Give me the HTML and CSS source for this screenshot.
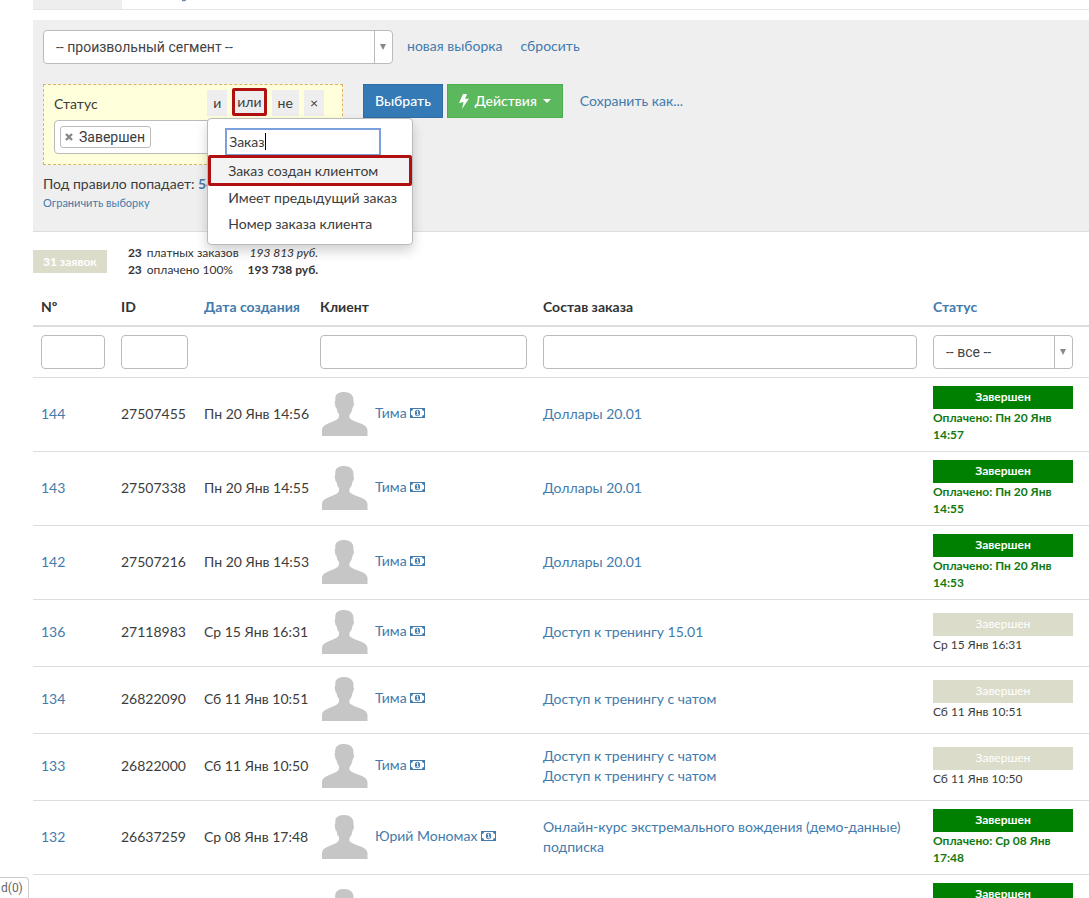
FILE: index.html
```html
<!DOCTYPE html>
<html lang="ru">
<head>
<meta charset="utf-8">
<title>Заказы</title>
<link rel="stylesheet" href="styles.css">
</head>
<body>
<svg class="sprite" aria-hidden="true">
  <symbol id="person" viewBox="0 0 50 50"><path d="M2 46V40Q2 36 7 34L14 31Q19 29 19 26L19 24Q17 22 16.500 18Q15 17 15 14Q14 12 15.200 11Q14 3 22 2Q33 1 33.500 10V12Q34.500 14 33.500 16L32.500 18Q32 22 29.500 25V28Q30 29 34 31L42 34Q47 36 47.500 40V46Z" fill="#c6c6c6"/></symbol>
  <symbol id="money" viewBox="0 0 15 10"><path fill="currentColor" fill-rule="evenodd" d="M0 0H15V10H0ZM3 1Q3 3 1 3V7Q3 7 3 9H12Q12 7 14 7V3Q12 3 12 1Z"/><ellipse cx="7.500" cy="5" rx="2.600" ry="3.200" fill="currentColor"/><path d="M6.500 3.500L7.700 2.800V6.500M6.400 6.800H9" stroke="#fff" fill="none"/></symbol>
</svg>
<main class="page">
  <nav class="tabs" aria-label="Разделы"><span class="tab"></span><svg class="tab-mark" width="5" height="2" viewBox="0 0 5 2"><path d="M0 .5Q2 1.500 4 0" stroke="#55708c" fill="none"/></svg></nav>

  <section class="panel">
    <div class="segment">
      <span class="select select-segment"><select aria-label="Сегмент"><option>-- произвольный сегмент --</option></select></span>
      <a href="#">новая выборка</a>
      <a href="#">сбросить</a>
    </div>
    <div class="builder">
      <div class="rule">
        <div class="rule-head">
          <span class="rule-name">Статус</span>
          <div class="ops">
            <button type="button" class="op">и</button>
            <button type="button" class="op op-marked">или</button>
            <button type="button" class="op">не</button>
            <button type="button" class="op op-close" aria-label="Удалить">×</button>
            <div class="menu">
              <input class="menu-search" type="text" value="Заказ" aria-label="Поиск условия">
              <span class="caret-line"></span>
              <button type="button" class="menu-item menu-item-marked">Заказ создан клиентом</button>
              <button type="button" class="menu-item">Имеет предыдущий заказ</button>
              <button type="button" class="menu-item">Номер заказа клиента</button>
            </div>
          </div>
        </div>
        <div class="tags">
          <span class="tag"><button type="button" class="tag-remove" aria-label="Убрать"><svg width="8" height="8" viewBox="0 0 8 8"><path d="M1 1L7 7M7 1L1 7" stroke="#888" stroke-width="2.400"/></svg></button>Завершен</span>
        </div>
      </div>
      <div class="actions">
        <button type="button" class="btn btn-primary">Выбрать</button>
        <button type="button" class="btn btn-success"><svg width="10" height="15" viewBox="0 0 10 15"><path d="M4 0H8L6 5L10 4.500L3 15L4.500 8L0 9Z" fill="#fff"/></svg>Действия<span class="caret"></span></button>
        <a class="save" href="#">Сохранить как...</a>
      </div>
    </div>
    <div class="matched">Под правило попадает: <a href="#">54</a></div>
    <a class="limit" href="#">Ограничить выборку</a>
  </section>

  <section class="summary">
    <span class="count"><b>31</b> заявок</span>
    <div class="totals">
      <b>23</b><span>платных заказов</span><i>193 813 руб.</i>
      <b>23</b><span>оплачено 100%</span><b class="sum">193 738 руб.</b>
    </div>
  </section>

  <table class="orders">
    <colgroup><col class="c-num"><col class="c-id"><col class="c-date"><col class="c-client"><col><col class="c-status"></colgroup>
    <thead>
      <tr><th>Nº</th><th>ID</th><th><a href="#">Дата создания</a></th><th>Клиент</th><th>Состав заказа</th><th><a href="#">Статус</a></th></tr>
    </thead>
    <tbody>
      <tr class="filters">
        <td><input type="text" aria-label="Номер"></td><td><input type="text" aria-label="ID"></td><td></td><td><input type="text" aria-label="Клиент"></td><td><input type="text" aria-label="Состав заказа"></td>
        <td><span class="select select-status"><select aria-label="Статус"><option>-- все --</option></select></span></td>
      </tr>
      <tr class="order"><td><a href="#">144</a></td><td>27507455</td><td>Пн 20 Янв 14:56</td><td><div class="client"><svg class="avatar"><use href="#person"/></svg><a href="#">Тима <svg class="money"><use href="#money"/></svg></a></div></td><td><a href="#">Доллары 20.01</a></td><td><div class="state paid">Завершен</div><div class="when when-paid">Оплачено: Пн 20 Янв 14:57</div></td></tr>
      <tr class="order"><td><a href="#">143</a></td><td>27507338</td><td>Пн 20 Янв 14:55</td><td><div class="client"><svg class="avatar"><use href="#person"/></svg><a href="#">Тима <svg class="money"><use href="#money"/></svg></a></div></td><td><a href="#">Доллары 20.01</a></td><td><div class="state paid">Завершен</div><div class="when when-paid">Оплачено: Пн 20 Янв 14:55</div></td></tr>
      <tr class="order"><td><a href="#">142</a></td><td>27507216</td><td>Пн 20 Янв 14:53</td><td><div class="client"><svg class="avatar"><use href="#person"/></svg><a href="#">Тима <svg class="money"><use href="#money"/></svg></a></div></td><td><a href="#">Доллары 20.01</a></td><td><div class="state paid">Завершен</div><div class="when when-paid">Оплачено: Пн 20 Янв 14:53</div></td></tr>
      <tr class="order"><td><a href="#">136</a></td><td>27118983</td><td>Ср 15 Янв 16:31</td><td><div class="client"><svg class="avatar"><use href="#person"/></svg><a href="#">Тима <svg class="money"><use href="#money"/></svg></a></div></td><td><a href="#">Доступ к тренингу 15.01</a></td><td><div class="state">Завершен</div><div class="when">Ср 15 Янв 16:31</div></td></tr>
      <tr class="order"><td><a href="#">134</a></td><td>26822090</td><td>Сб 11 Янв 10:51</td><td><div class="client"><svg class="avatar"><use href="#person"/></svg><a href="#">Тима <svg class="money"><use href="#money"/></svg></a></div></td><td><a href="#">Доступ к тренингу с чатом</a></td><td><div class="state">Завершен</div><div class="when">Сб 11 Янв 10:51</div></td></tr>
      <tr class="order"><td><a href="#">133</a></td><td>26822000</td><td>Сб 11 Янв 10:50</td><td><div class="client"><svg class="avatar"><use href="#person"/></svg><a href="#">Тима <svg class="money"><use href="#money"/></svg></a></div></td><td><a href="#">Доступ к тренингу с чатом<br>Доступ к тренингу с чатом</a></td><td><div class="state">Завершен</div><div class="when">Сб 11 Янв 10:50</div></td></tr>
      <tr class="order"><td><a href="#">132</a></td><td>26637259</td><td>Ср 08 Янв 17:48</td><td><div class="client"><svg class="avatar"><use href="#person"/></svg><a href="#">Юрий Мономах <svg class="money"><use href="#money"/></svg></a></div></td><td><a href="#">Онлайн-курс экстремального вождения (демо-данные) подписка</a></td><td><div class="state paid">Завершен</div><div class="when when-paid">Оплачено: Ср 08 Янв 17:48</div></td></tr>
      <tr class="last"><td></td><td></td><td></td><td><div class="client"><svg class="avatar"><use href="#person"/></svg></div></td><td></td><td><div class="state paid">Завершен</div></td></tr>
    </tbody>
  </table>
</main>
<div class="link-status">d(0)</div>
</body>
</html>
```
FILE: styles.css
```css
* { box-sizing: border-box; }
body {
  margin: 0;
  height: 100vh;
  overflow: hidden;
  background: #fff;
  color: #3c3c3c;
  font: 14px/20px Lato, Roboto, sans-serif;
}
a { color: #427bac; text-decoration: none; }
button, input, select { font: inherit; color: inherit; margin: 0; }
.sprite { position: absolute; width: 0; height: 0; }
.page { padding-left: 33px; }

.tabs { display: flex; align-items: flex-start; gap: 60px; height: 10px; border-bottom: 1px solid #e6e6e6; }
.tab { display: block; width: 89px; height: 9px; background: #eee; }

.panel {
  margin-top: 10px;
  padding: 10px 10px 20px;
  background: #efefef;
  border-bottom: 1px solid #ddd;
}
.segment { display: flex; align-items: center; }
.segment a { margin-left: 14px; padding-bottom: 2px; }
.segment a + a { margin-left: 18px; }

.select {
  position: relative;
  display: block;
  height: 34px;
  border: 1px solid #bbb;
  border-radius: 4px;
  background: #fff;
  overflow: hidden;
}
.select select {
  appearance: none;
  width: 100%;
  height: 100%;
  padding: 0 30px 0 12px;
  border: 0;
  background: none;
  color: #444;
  font-family: Roboto, sans-serif;
}
.select::before {
  content: "";
  position: absolute;
  top: 0;
  bottom: 0;
  right: 17px;
  border-left: 1px solid #bbb;
}
.select::after {
  content: "";
  position: absolute;
  top: 13px;
  right: 6px;
  border: 3px solid transparent;
  border-top: 6px solid #888;
  border-bottom: 0;
}
.select-segment { width: 350px; }

.builder { display: flex; gap: 20px; margin-top: 20px; align-items: flex-start; }
.rule {
  width: 300px;
  height: 81px;
  padding: 4px 10px;
  border: 1px dashed #dfb06a;
  background: #ffffdc;
}
.rule-head { display: flex; justify-content: space-between; align-items: center; height: 28px; }
.rule-name { padding-top: 2px; }
.ops { position: relative; display: flex; gap: 5px; padding-right: 8px; }
.op {
  height: 26px;
  padding: 0 6px;
  border: 0;
  background: #eee;
}
.op-marked { height: 28px; margin: -2px 0; padding: 0 2px; border: 3px solid #b01010; border-radius: 2px; }
.tags {
  display: flex;
  height: 34px;
  margin-top: 3px;
  padding: 5px;
  border: 1px solid #bbb;
  border-radius: 4px;
  background: #fff;
}
.tag {
  display: flex;
  align-items: center;
  gap: 6px;
  height: 22px;
  padding: 0 5px 0 4px;
  border: 1px solid #bbb;
  border-radius: 3px;
  font-family: Roboto, sans-serif;
}
.tag-remove { display: flex; padding: 0; border: 0; background: none; }

.menu {
  position: absolute;
  z-index: 2;
  top: 28px;
  left: 0;
  width: 206px;
  padding: 9px 0 6px;
  border: 1px solid #bbb;
  border-radius: 4px;
  background: #fff;
  box-shadow: 0 6px 12px rgba(0, 0, 0, .18);
}
.menu-search {
  display: block;
  width: 156px;
  height: 27px;
  margin-left: 17px;
  padding: 0 2px 2px;
  border: 2px solid #7ba0dc;
  border-bottom-width: 1px;
  outline: 0;
  background: #fff;
}
.caret-line { position: absolute; top: 14px; left: 57px; width: 1px; height: 17px; background: #000; }
.menu-item {
  display: block;
  width: 100%;
  height: 26px;
  padding: 0 0 2px 20px;
  border: 0;
  background: none;
  text-align: left;
  white-space: nowrap;
}
.menu-item-marked {
  height: 31px;
  padding: 0 0 0 17px;
  border: 3px solid #b01010;
  border-radius: 2px;
  background: #f3f3f3;
}

.actions { display: flex; align-items: center; gap: 4px; }
.btn {
  display: flex;
  align-items: center;
  justify-content: center;
  height: 34px;
  padding: 0 11px;
  border: 1px solid #2e6da4;
  background: #337ab7;
  color: #fff;
  font-weight: 500;
}
.btn-success { gap: 6px; border-color: #4cae4c; background: #5cb85c; }
.caret { border: 4px solid transparent; border-top-color: #fff; border-bottom: 0; }
.save { margin-left: 13px; }
.matched { margin-top: 9px; }
.matched a { font-weight: 700; }
.limit { display: block; font-size: 11px; line-height: 17px; }

.summary { display: flex; align-items: center; gap: 21px; padding-top: 12px; font-size: 12px; line-height: 17px; }
.count { padding: 3px 10px; background: #dcdcca; color: #fff; font-weight: 700; }
.totals { display: grid; grid-template-columns: auto auto auto; column-gap: 5px; color: #333; }
.totals i, .totals .sum { padding-left: 4px; text-align: right; }

.orders { width: 100%; margin-top: 11px; border-collapse: separate; border-spacing: 0; table-layout: fixed; }
.c-num { width: 80px; }
.c-id { width: 83px; }
.c-date { width: 116px; }
.c-client { width: 223px; }
.c-status { width: 164px; }
.orders th { padding: 8px; text-align: left; font-weight: 700; color: #333; border-bottom: 1px solid #ddd; white-space: nowrap; }
.orders td { padding: 8px; border-top: 1px solid #ddd; vertical-align: middle; }
.order td { padding-bottom: 10px; }
.order td:nth-child(3) { white-space: nowrap; }
.order td:nth-child(4), .order td:last-child { padding-bottom: 8px; }
.orders td:last-child { padding-right: 16px; }
.orders input {
  display: block;
  width: 100%;
  height: 34px;
  padding: 0 12px;
  border: 1px solid #bbb;
  border-radius: 4px;
  background: #fff;
}
.client { display: flex; align-items: center; gap: 5px; }
.client a { padding-bottom: 4px; }
.avatar { width: 50px; height: 50px; }
.money { width: 15px; height: 10px; }
.state { height: 23px; padding-bottom: 1px; background: #dcdcca; color: #fff; text-align: center; font-size: 12px; line-height: 22px; }
.paid { background: #008000; font-weight: 700; }
.when { font-size: 12px; line-height: 17px; white-space: nowrap; }
.when-paid { color: #107a10; font-weight: 700; white-space: normal; }
.last td { height: 74px; }
.last td:last-child { vertical-align: top; }

.link-status {
  position: fixed;
  left: 0;
  bottom: 0;
  padding: 0 5px 0 1px;
  border: 1px solid #ccc;
  border-width: 1px 1px 0 0;
  border-top-right-radius: 4px;
  background: #fff;
  color: #666;
  font: 12px/20px Roboto, sans-serif;
}
```
